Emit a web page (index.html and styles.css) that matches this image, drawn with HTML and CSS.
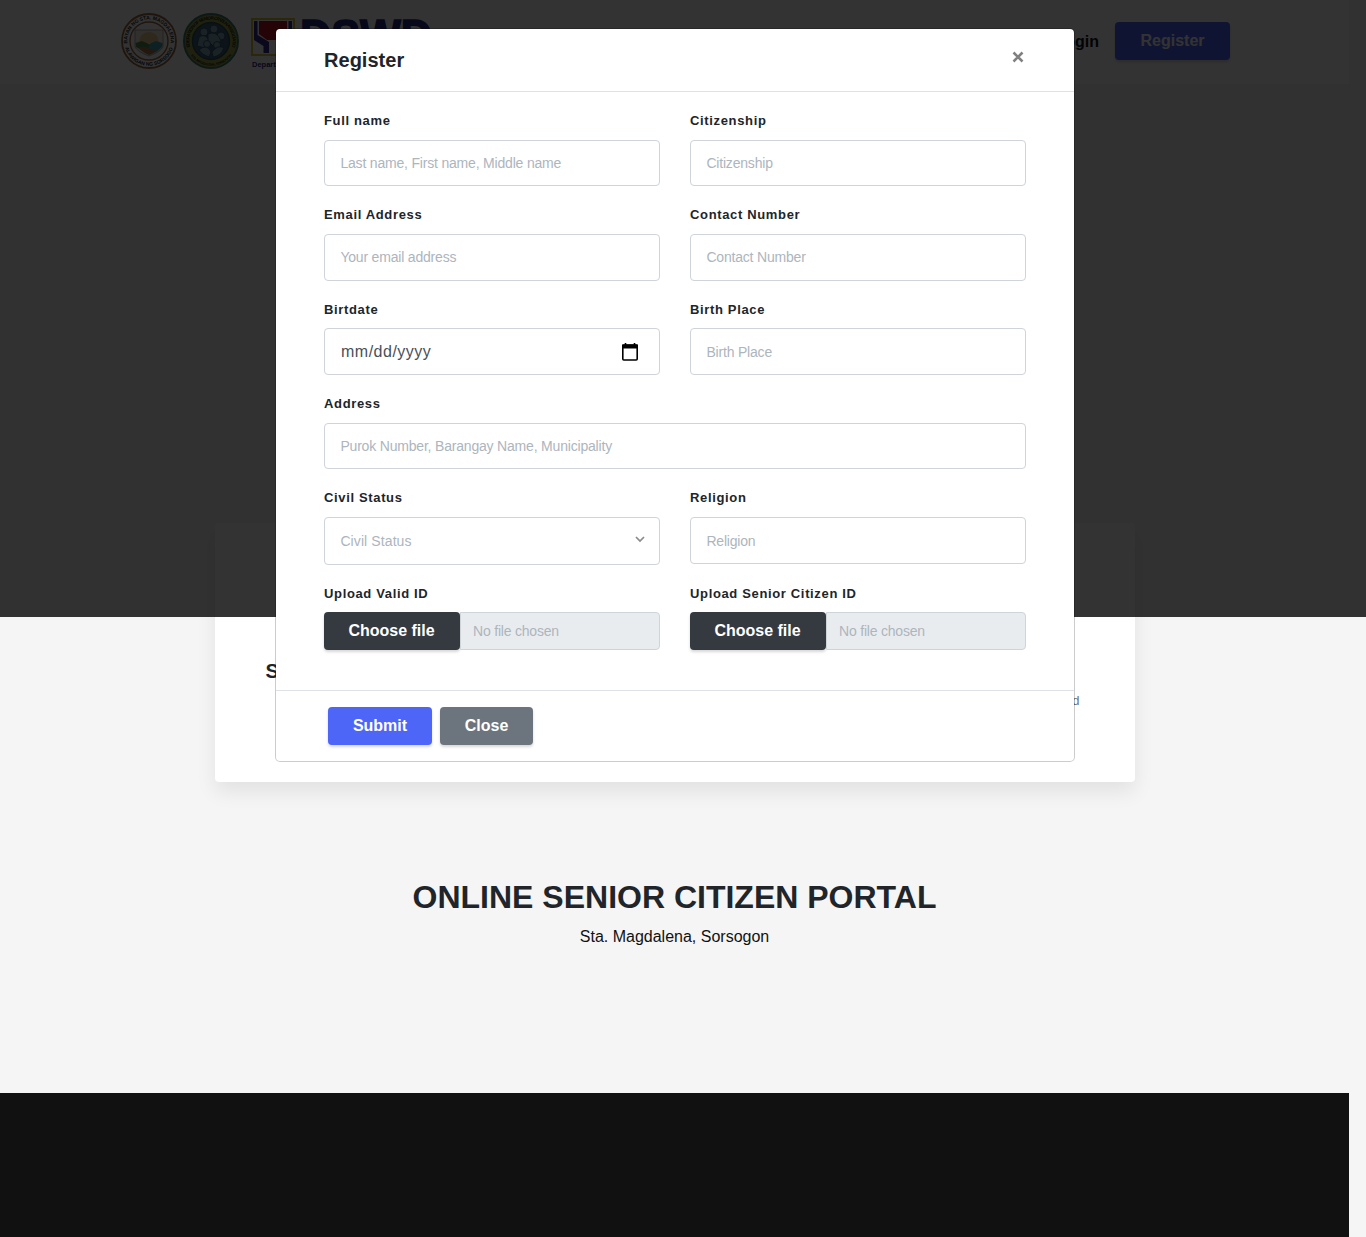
FILE: index.html
```html
<!DOCTYPE html>
<html lang="en">
<head>
<meta charset="utf-8">
<title>Online Senior Citizen Portal</title>
<link rel="stylesheet" href="styles.css">
</head>
<body>
<div class="page">
  <header class="navbar">
    <div class="brand">
      <svg class="seal" width="58" height="58" viewBox="0 0 58 58">
        <defs>
          <path id="ring-top" d="M8 34.6A21.7 21.7 0 1 1 50 34.6"/>
          <path id="ring-bottom" d="M4.8 35A25 25 0 0 0 53.2 35"/>
        </defs>
        <circle cx="29" cy="29" r="27" fill="#fff" stroke="#a0683c" stroke-width="1.8"/>
        <circle cx="29" cy="29" r="19" fill="#fff" stroke="#a0683c" stroke-width="1.4"/>
        <text class="seal-text"><textPath href="#ring-top" startOffset="50%" text-anchor="middle">BAYAN NG STA. MAGDALENA</textPath></text>
        <text class="seal-text"><textPath href="#ring-bottom" startOffset="50%" text-anchor="middle">LALAWIGAN NG SORSOGON</textPath></text>
        <path d="M15 18H43V35Q40 40 29 44Q18 40 15 35Z" fill="#f7efdf" stroke="#999" stroke-width=".8"/>
        <path d="M19 31Q20 20 29 20Q38 20 39 31Z" fill="#eac98b"/>
        <path d="M15.5 31L22 29L29 32V42L16 35Z" fill="#528a50"/>
        <path d="M29 32L36 29L42.5 31V34Q40 39 29 43Z" fill="#40a5ba"/>
        <path d="M19 36Q24 33 30 37L37 38Q34 41 29 43Q22 40 19 36Z" fill="#af7a4c"/>
      </svg>
      <svg class="seal" width="58" height="58" viewBox="0 0 58 58">
        <circle cx="29" cy="29" r="27" fill="#9ba546" stroke="#377968" stroke-width="2"/>
        <circle cx="29" cy="29" r="18.5" fill="#3f647f" stroke="#28505c" stroke-width="1.5"/>
        <text class="seal-text seal-narrow"><textPath href="#ring-top" startOffset="50%" text-anchor="middle">FEDERATION OF SENIOR CITIZEN ASSOCIATION</textPath></text>
        <text class="seal-text seal-small"><textPath href="#ring-bottom" startOffset="50%" text-anchor="middle">STA. MAGDALENA, SORSOGON</textPath></text>
        <g fill="#86a9bd" stroke="#274c66" stroke-width=".8">
          <circle cx="22" cy="20" r="4"/><circle cx="32" cy="17" r="4"/><circle cx="39" cy="24" r="4"/>
          <path d="M17 25Q23 21 27 28L24 36L15 34Z"/><path d="M26 22Q35 18 39 29L32 35L26 29Z"/>
          <circle cx="25" cy="32" r="3.5"/><circle cx="35" cy="33" r="3.5"/>
          <path d="M17 38Q25 31 29 40L27 45Q20 43 17 38ZM30 40Q36 32 42 36Q39 44 31 45Z"/>
        </g>
      </svg>
      <svg class="dswd" width="190" height="54" viewBox="0 0 190 54">
        <rect x="1" y="1" width="42" height="36" fill="#fff" stroke="#d1c33a" stroke-width="2"/>
        <path d="M8 3H36V16L27 22H16L8 16Z" fill="#b51522"/>
        <path d="M3 3H6.500V17L18 24V35H12.500V28L3 22ZM41 3H37.500V17L26 24V35H31V28L41 22Z" fill="#312a8d"/>
        <text class="dswd-name" x="49" y="34" textLength="132" lengthAdjust="spacingAndGlyphs">DSWD</text>
        <text class="dswd-caption" x="1" y="49">Department</text>
      </svg>
    </div>
    <nav class="nav-links">
      <a class="nav-link">Login</a>
      <a class="btn btn-primary">Register</a>
    </nav>
  </header>
  <main>
    <section class="card">
      <h2 class="card-title">Senior</h2>
      <p class="card-note">registered</p>
    </section>
    <section class="intro">
      <h1>ONLINE SENIOR CITIZEN PORTAL</h1>
      <p>Sta. Magdalena, Sorsogon</p>
    </section>
  </main>
  <footer class="page-footer"></footer>
</div>

<div class="backdrop"></div>
<div class="modal">
  <div class="modal-header">
    <h5>Register</h5>
    <svg class="modal-close" width="12" height="12" viewBox="0 0 12 12"><path d="M1.5 1.5L10.5 10.5M10.5 1.5L1.5 10.5" stroke="#808080" stroke-width="2.6"/></svg>
  </div>
  <form class="modal-body">
    <div class="field"><label>Full name</label><div class="control">Last name, First name, Middle name</div></div>
    <div class="field"><label>Citizenship</label><div class="control">Citizenship</div></div>
    <div class="field"><label>Email Address</label><div class="control">Your email address</div></div>
    <div class="field"><label>Contact Number</label><div class="control">Contact Number</div></div>
    <div class="field"><label>Birtdate</label>
      <div class="control control-date"><span>mm/dd/yyyy</span>
        <svg width="16" height="18" viewBox="0 0 16 18"><path d="M3.5 0V3M12.5 0V3" stroke="#000" stroke-width="1.6"/><rect x=".8" y="2" width="14.4" height="15" rx="1" fill="none" stroke="#000" stroke-width="1.6"/><path d="M0 1.5H16V5.5H0Z"/></svg>
      </div>
    </div>
    <div class="field"><label>Birth Place</label><div class="control">Birth Place</div></div>
    <div class="field field-wide"><label>Address</label><div class="control">Purok Number, Barangay Name, Municipality</div></div>
    <div class="field"><label>Civil Status</label>
      <div class="control control-select"><span>Civil Status</span>
        <svg width="10" height="7" viewBox="0 0 10 7"><path d="M1 1L5 5L9 1" fill="none" stroke="#8a8a8a" stroke-width="1.7"/></svg>
      </div>
    </div>
    <div class="field"><label>Religion</label><div class="control">Religion</div></div>
    <div class="field"><label>Upload Valid ID</label><div class="file"><span class="btn btn-dark">Choose file</span><span class="file-name">No file chosen</span></div></div>
    <div class="field"><label>Upload Senior Citizen ID</label><div class="file"><span class="btn btn-dark">Choose file</span><span class="file-name">No file chosen</span></div></div>
  </form>
  <div class="modal-footer">
    <span class="btn btn-primary btn-submit">Submit</span>
    <span class="btn btn-secondary">Close</span>
  </div>
</div>
</body>
</html>
```
FILE: styles.css
```css
* { box-sizing: border-box; }
body {
  margin: 0;
  height: 1237px;
  overflow: hidden;
  position: relative;
  background: #f5f5f5;
  color: #212529;
  font: 16px/24px "Liberation Sans", Arial, sans-serif;
}
h1, h2, h5, p { margin: 0; }
.page { width: 1349px; height: 1237px; display: flex; flex-direction: column; }
.navbar {
  height: 84px;
  flex: none;
  padding: 0 119px 0 120px;
  display: flex;
  justify-content: space-between;
  align-items: flex-start;
  background: #fff;
}
.brand { display: flex; gap: 4px; padding-top: 12px; }
.dswd { margin: 6px 0 0 7px; }
.seal-text { font-size: 5px; font-weight: bold; fill: #222; }
.seal-narrow { font-size: 4.6px; letter-spacing: -.6px; }
.seal-small { font-size: 3.5px; letter-spacing: -.3px; }
.dswd-name { font-size: 46px; font-weight: bold; fill: #2a2887; stroke: #2a2887; stroke-width: 1.5px; }
.dswd-caption { font-size: 7.5px; font-weight: bold; fill: #2a2887; }
.nav-links { display: flex; gap: 16px; padding-top: 22px; }
.nav-link { font-weight: bold; line-height: 39px; color: #111; }
.btn {
  height: 38px;
  border-radius: 4px;
  display: flex;
  align-items: center;
  justify-content: center;
  padding-bottom: 1px;
  color: #fff;
  font-weight: bold;
  box-shadow: 0 2px 3px rgba(0, 0, 0, .16);
}
.btn-primary { width: 115px; background: #4e66f8; }
.btn-submit { width: 104px; }
.btn-secondary { width: 93px; background: #6c757d; }
.btn-dark { width: 136px; padding: 0 1px 0 0; background: #343a40; }

.card {
  width: 920px;
  height: 259px;
  margin: 439px auto 0;
  padding: 136px 50px 0;
  background: #fff;
  border-radius: 4px;
  box-shadow: 0 10px 20px rgba(0, 0, 0, .08);
}
.card-title { font-size: 20px; line-height: 24px; padding-left: 1px; }
.card-note { font-size: 13px; line-height: 20px; margin: 8px 5px 0 0; text-align: right; color: #6c757d; }
.intro { margin-top: 94px; text-align: center; }
.intro h1 { font-size: 32px; line-height: 42px; }
.intro p { line-height: 24px; margin-top: 7px; color: #111; }
.page-footer { height: 144px; flex: none; margin-top: auto; background: #111; }

.backdrop { position: absolute; top: 0; left: 0; width: 100%; height: 617px; background: rgba(0, 0, 0, .8); }
.modal {
  position: absolute;
  top: 28px;
  left: 275px;
  width: 800px;
  height: 734px;
  background: #fff;
  background-clip: padding-box;
  border: 1px solid rgba(0, 0, 0, .2);
  border-radius: 5px;
}
.modal-header {
  height: 63px;
  padding: 0 50px 0 48px;
  display: flex;
  justify-content: space-between;
  align-items: center;
  border-bottom: 1px solid #dee2e6;
}
.modal-header h5 { font-size: 20px; line-height: 24px; letter-spacing: .03px; }
.modal-close { margin-bottom: 7px; }
.modal-body {
  height: 598px;
  padding: 17.55px 48px 0;
  display: grid;
  grid-template-columns: 336px 336px;
  column-gap: 30px;
  row-gap: 17.75px;
  align-content: start;
}
.field-wide { grid-column: 1 / 3; }
.field label { display: block; padding-top: 1.2px; font-size: 13px; font-weight: bold; line-height: 20px; letter-spacing: .65px; margin-bottom: 8.8px; }
.control {
  height: 46.7px;
  padding: 0 15.4px;
  display: flex;
  align-items: center;
  justify-content: space-between;
  border: 1px solid #ced4da;
  border-radius: 4px;
  font-size: 14px;
  letter-spacing: -.19px;
  color: #adb5bd;
}
.control-date { padding: 0 21px 0 16px; font-size: 16px; letter-spacing: .5px; color: #495057; }
.control-select { height: 47.4px; padding-right: 14px; letter-spacing: .1px; }
.control-select svg { margin-bottom: 3px; }
.file { height: 38px; margin-top: -.5px; display: flex; }
.file-name {
  flex: 1;
  padding-left: 12px;
  line-height: 36px;
  font-size: 14px;
  letter-spacing: -.2px;
  color: #adb5bd;
  background: #e9ecef;
  border: 1px solid #ced4da;
  border-radius: 0 4px 4px 0;
}
.modal-footer { padding: 16px 52px; display: flex; gap: 8px; border-top: 1px solid #dee2e6; }
```
